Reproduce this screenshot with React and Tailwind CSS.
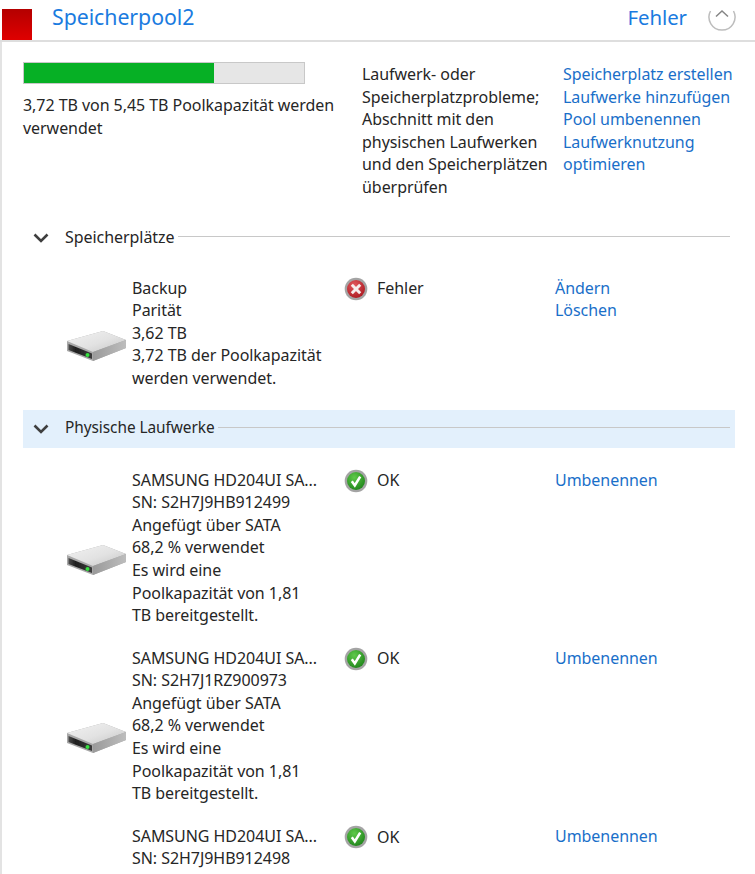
import React from "react";

function Drive() {
  return (
    <svg width="62" height="34" viewBox="0 0 62 34" className="block">
      <defs>
        <linearGradient id="top" x1="0" y1="0" x2="1" y2="1">
          <stop offset="0" stopColor="#f2f2f2" />
          <stop offset="0.55" stopColor="#e2e2e2" />
          <stop offset="1" stopColor="#c4c4c4" />
        </linearGradient>
        <linearGradient id="side" x1="0" y1="0" x2="1" y2="0">
          <stop offset="0" stopColor="#9a9a9a" />
          <stop offset="1" stopColor="#bdbdbd" />
        </linearGradient>
        <linearGradient id="front" x1="0" y1="0" x2="1" y2="0">
          <stop offset="0" stopColor="#4a4a4a" />
          <stop offset="0.3" stopColor="#1f1f1f" />
          <stop offset="1" stopColor="#3a3a3a" />
        </linearGradient>
        <filter id="soft"><feGaussianBlur stdDeviation="0.5" /></filter>
      </defs>
      <g filter="url(#soft)">
        <path d="M1 11 L37 1 L60 10 L60 18 L27 31 L1 21 Z" fill="#a8a8a8" />
        <path d="M1 11 L37 1 L60 10 L27 22 Z" fill="url(#top)" />
        <path d="M27 22 L60 10 L60 18 L27 31 Z" fill="url(#side)" />
        <path d="M2.5 14 L26 23.5 L26 29 L2.5 20 Z" fill="url(#front)" />
        <circle cx="21.5" cy="25" r="2" fill="#35e03f" />
      </g>
    </svg>
  );
}

function StatusIcon({ ok }) {
  return (
    <svg width="24" height="24" viewBox="0 0 24 24" className="block shrink-0">
      <defs>
        <radialGradient id="g" cx="0.4" cy="0.3" r="0.8">
          <stop offset="0" stopColor="#5fc94a" />
          <stop offset="1" stopColor="#1a7f17" />
        </radialGradient>
        <radialGradient id="r" cx="0.4" cy="0.3" r="0.8">
          <stop offset="0" stopColor="#e25a5f" />
          <stop offset="1" stopColor="#a8141c" />
        </radialGradient>
      </defs>
      <circle cx="12" cy="12" r="11.3" fill="#a4a4a4" />
      <circle cx="12" cy="12" r="9" fill={ok ? "url(#g)" : "url(#r)"} />
      {ok ? (
        <path d="M7.8 12.3 L10.8 16.4 L16.2 7.6" fill="none" stroke="#fff" strokeWidth="2.6" />
      ) : (
        <path d="M7.8 7.8 L16.2 16.2 M16.2 7.8 L7.8 16.2" fill="none" stroke="#f6eeee" strokeWidth="3" />
      )}
    </svg>
  );
}

function SectionHead({ label, active }) {
  return (
    <div className={`flex h-[38px] items-center ${active ? "bg-[#e3f0fc]" : ""}`}>
      <svg width="16" height="10" viewBox="0 0 16 10" className="ml-[10px] shrink-0">
        <path d="M1.5 1.5 L8 8 L14.5 1.5" fill="none" stroke="#3f3f3f" strokeWidth="2.6" />
      </svg>
      <span className={`ml-[16px] ${active ? "text-[15.4px]" : "text-[16px]"}`}>{label}</span>
      <div className="ml-[3px] mr-[5px] h-px flex-1 -translate-y-px bg-[#c8c8c8]" />
    </div>
  );
}

function Row({ lines, ok, status, links, className, noDrive }) {
  return (
    <div className={`flex items-center ${className}`}>
      <div className="ml-[43px] mt-[27px] w-[66px] shrink-0">
        {noDrive ? null : <Drive />}
      </div>
      <div className="w-[212px] shrink-0">
        {lines.map((l) => (
          <div key={l} className="whitespace-nowrap">{l}</div>
        ))}
      </div>
      <div className="flex w-[211px] shrink-0 items-center self-start">
        <StatusIcon ok={ok} />
        <span className="ml-[9px]">{status}</span>
      </div>
      <div className="self-start text-[#1a6fc9]">
        {links.map((l) => (
          <div key={l}>{l}</div>
        ))}
      </div>
    </div>
  );
}

export default function App() {
  return (
    <div
      className="h-[874px] w-[755px] overflow-hidden bg-white text-[16px] leading-[22.6px] tracking-[-0.05px] text-[#262626]"
      style={{ fontFamily: '"Noto Sans", sans-serif' }}
    >
      <div className="flex h-[42px] items-start border-b-2 border-[#dedede] pl-[2px]">
        <div className="mt-[9px] h-[31px] w-[30px] bg-linear-to-b from-[#b40000] to-[#e00000]" />
        <div className="ml-[20px] mt-[3px] text-[21.3px] leading-[28px] text-[#1a7be0]">Speicherpool2</div>
        <div className="ml-auto mt-[3px] text-[20.4px] leading-[28px] text-[#1a7be0]">Fehler</div>
        <svg width="30" height="30" viewBox="0 0 30 30" className="ml-[20px] mr-[18px] mt-[3px] shrink-0">
          <path d="M3.5 8 A13 13 0 1 0 26.5 8" fill="none" stroke="#bdbdbd" strokeWidth="1.5" />
          <path d="M9 13.5 L15 8 L21 13.5" fill="none" stroke="#858585" strokeWidth="1.5" />
        </svg>
      </div>

      <div className="h-[832px] border-l-2 border-[#e3e3e3] pl-[21px]">
        <div className="flex pt-[20px]">
          <div className="w-[339px] shrink-0">
            <div className="h-[22px] w-[282px] border border-[#c8c8c8] bg-[#e6e6e6]">
              <div className="h-full w-[68%] bg-[#06b025]" />
            </div>
            <div className="mt-[10px] w-[320px]">3,72 TB von 5,45 TB Poolkapazität werden verwendet</div>
          </div>
          <div className="w-[201px] shrink-0 whitespace-nowrap pt-px">
            <div>Laufwerk- oder</div>
            <div>Speicherplatzprobleme;</div>
            <div>Abschnitt mit den</div>
            <div>physischen Laufwerken</div>
            <div>und den Speicherplätzen</div>
            <div>überprüfen</div>
          </div>
          <div className="whitespace-nowrap pt-px text-[#1a6fc9]">
            <div>Speicherplatz erstellen</div>
            <div>Laufwerke hinzufügen</div>
            <div>Pool umbenennen</div>
            <div>Laufwerknutzung</div>
            <div>optimieren</div>
          </div>
        </div>

        <div className="mt-[20px] w-[712px]">
          <SectionHead label="Speicherplätze" />
          <Row
            className="mt-[20px]"
            lines={["Backup", "Parität", "3,62 TB", "3,72 TB der Poolkapazität", "werden verwendet."]}
            ok={false}
            status="Fehler"
            links={["Ändern", "Löschen"]}
          />
          <div className="mt-[20px]">
            <SectionHead label="Physische Laufwerke" active />
          </div>
          <Row
            className="mt-[21px]"
            lines={["SAMSUNG HD204UI SA...", "SN: S2H7J9HB912499", "Angefügt über SATA", "68,2 % verwendet", "Es wird eine", "Poolkapazität von 1,81", "TB bereitgestellt."]}
            ok
            status="OK"
            links={["Umbenennen"]}
          />
          <Row
            className="mt-[20px]"
            lines={["SAMSUNG HD204UI SA...", "SN: S2H7J1RZ900973", "Angefügt über SATA", "68,2 % verwendet", "Es wird eine", "Poolkapazität von 1,81", "TB bereitgestellt."]}
            ok
            status="OK"
            links={["Umbenennen"]}
          />
          <Row
            className="mt-[20px]"
            noDrive
            lines={["SAMSUNG HD204UI SA...", "SN: S2H7J9HB912498"]}
            ok
            status="OK"
            links={["Umbenennen"]}
          />
        </div>
      </div>
    </div>
  );
}
